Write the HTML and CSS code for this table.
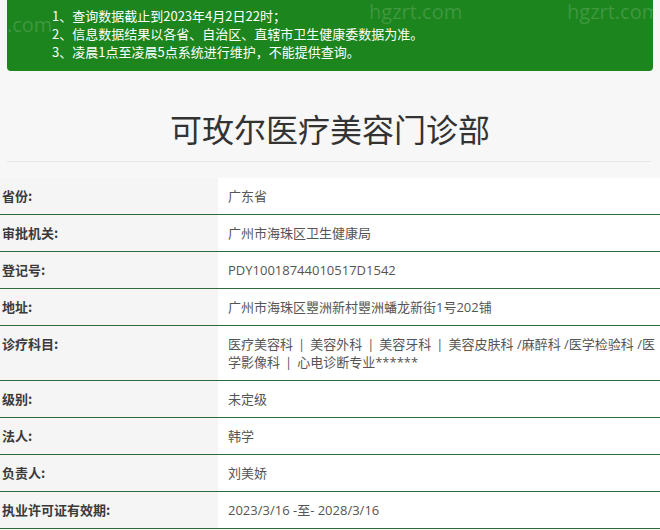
FILE: index.html
```html
<!DOCTYPE html>
<html lang="zh-CN">
<head>
<meta charset="utf-8">
<title>可玫尔医疗美容门诊部</title>
<link rel="stylesheet" href="styles.css">
</head>
<body>
<div class="notice">
  <p>1、查询数据截止到2023年4月2日22时；</p>
  <p>2、信息数据结果以各省、自治区、直辖市卫生健康委数据为准。</p>
  <p>3、凌晨1点至凌晨5点系统进行维护，不能提供查询。</p>
  <span class="wm wm1">hgzrt.com</span>
  <span class="wm wm2">hgzrt.com</span>
  <span class="wm wm3">.com</span>
</div>
<h1 class="title">可玫尔医疗美容门诊部</h1>
<div class="rule"></div>
<table class="info">
  <tr><td class="k">省份:</td><td class="v">广东省</td></tr>
  <tr><td class="k">审批机关:</td><td class="v">广州市海珠区卫生健康局</td></tr>
  <tr><td class="k">登记号:</td><td class="v">PDY10018744010517D1542</td></tr>
  <tr><td class="k">地址:</td><td class="v">广州市海珠区瞾洲新村瞾洲蟠龙新街1号202铺</td></tr>
  <tr><td class="k">诊疗科目:</td><td class="v">医疗美容科<span class="sep">|</span>美容外科<span class="sep">|</span>美容牙科<span class="sep">|</span>美容皮肤科 /麻醉科 /医学检验科 /医学影像科<span class="sep">|</span>心电诊断专业******</td></tr>
  <tr><td class="k">级别:</td><td class="v">未定级</td></tr>
  <tr><td class="k">法人:</td><td class="v">韩学</td></tr>
  <tr><td class="k">负责人:</td><td class="v">刘美娇</td></tr>
  <tr><td class="k">执业许可证有效期:</td><td class="v">2023/3/16 -至- 2028/3/16</td></tr>
</table>
</body>
</html>
```
FILE: styles.css
```css
html, body {
  margin: 0;
  padding: 0;
  background: #f7f7f7;
  font-family: "Noto Sans CJK SC", "Open Sans", sans-serif;
  font-size: 13px;
  line-height: 18px;
  color: #333;
}

.notice {
  position: relative;
  margin: 0 7px;
  padding: 7px 0 10px 45px;
  background: #1d851d;
  color: #fff;
  border-radius: 0 0 4px 4px;
  overflow: hidden;
}

.notice p {
  margin: 0;
}

.wm {
  position: absolute;
  font-family: "Open Sans", sans-serif;
  font-size: 20px;
  color: rgba(255, 255, 255, 0.16);
  line-height: 22px;
}

.wm1 { left: 362px; top: 1px; }
.wm2 { left: 560px; top: 1px; }
.wm3 { left: 0; top: 14px; }

.title {
  margin: 37px 0 0;
  font-size: 32px;
  line-height: 40px;
  font-weight: normal;
  text-align: center;
  color: #333;
}

.rule {
  margin: 13px 9px 0 7px;
  border-top: 1px solid #e6e6e6;
}

.info {
  width: 100%;
  margin-top: 16px;
  border-collapse: collapse;
}

.info td {
  padding: 9px 0;
  vertical-align: top;
  border-bottom: 1px solid #2d6a3c;
}

.info .k {
  width: 216px;
  padding-left: 2px;
  background: #f5f5f5;
  font-weight: bold;
  color: #3a3a3a;
}

.info .v {
  padding-left: 10px;
  padding-right: 0;
  background: #fff;
  color: #555;
  font-family: "Open Sans", "Noto Sans CJK SC", sans-serif;
}

.sep {
  display: inline-block;
  margin: 0 5px;
}
```
